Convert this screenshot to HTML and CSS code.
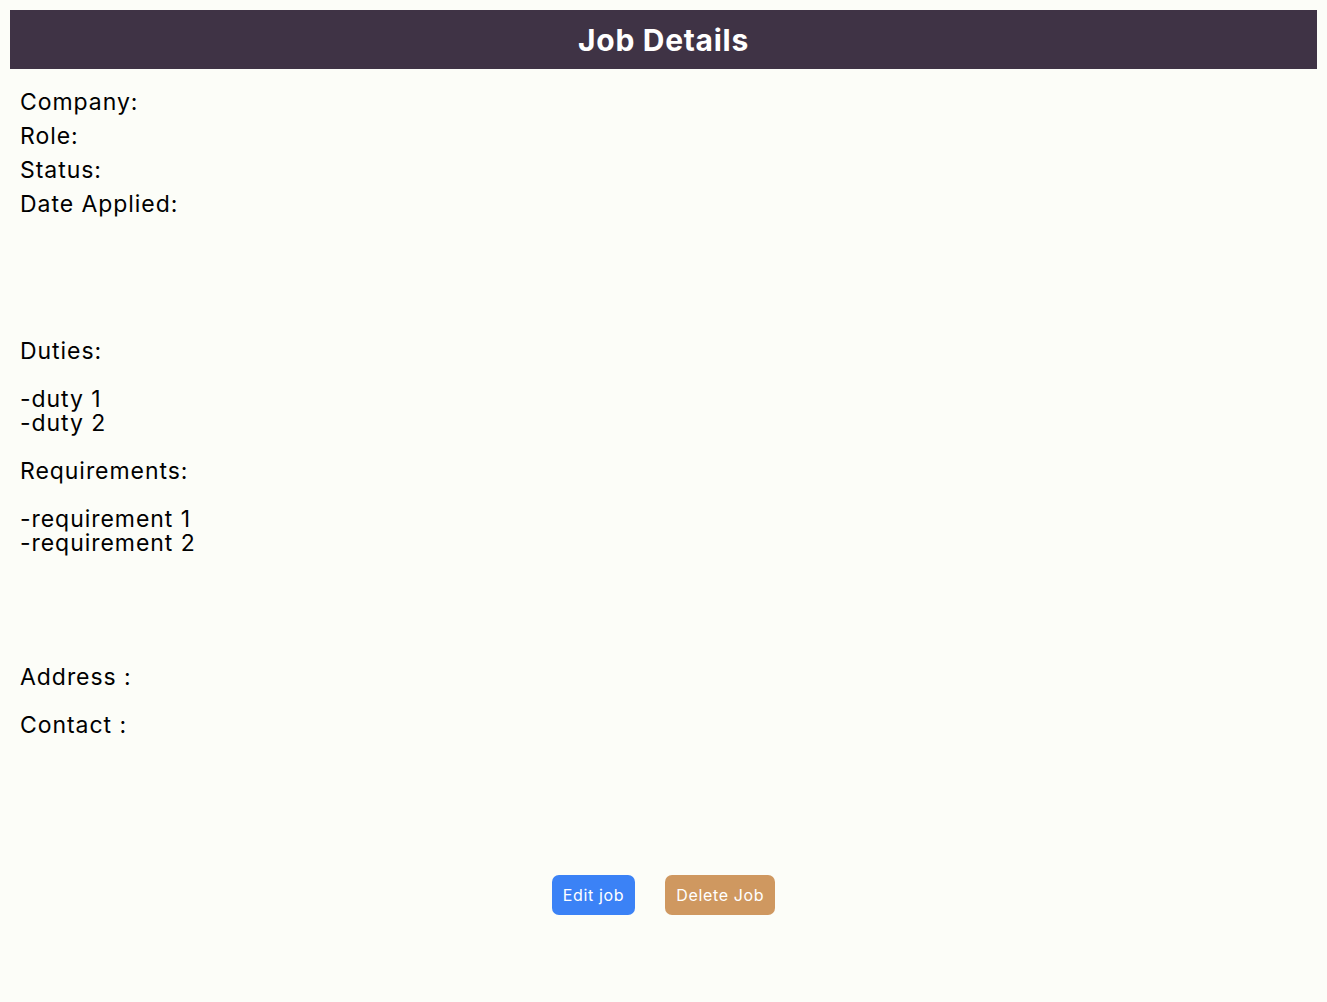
FILE: index.html
```html
<!DOCTYPE html>
<html lang="en">
<head>
<meta charset="utf-8">
<title>Job Details</title>
<link rel="stylesheet" href="styles.css">
</head>
<body>
<header class="topbar">
  <h1 class="title">Job Details</h1>
</header>
<main class="details">
  <section class="summary">
    <p class="field">Company:</p>
    <p class="field">Role:</p>
    <p class="field">Status:</p>
    <p class="field">Date Applied:</p>
  </section>
  <section class="lists">
    <p class="label">Duties:</p>
    <p class="items">-duty 1<br>-duty 2</p>
    <p class="label">Requirements:</p>
    <p class="items">-requirement 1<br>-requirement 2</p>
  </section>
  <section class="contact">
    <p class="label">Address :</p>
    <p class="label">Contact :</p>
  </section>
  <div class="actions">
    <button class="btn btn-edit" type="button">Edit job</button>
    <button class="btn btn-delete" type="button">Delete Job</button>
  </div>
</main>
</body>
</html>
```

FILE: styles.css
```css
html, body {
  background: #fcfdf8;
}
body {
  margin: 10px;
  font-family: Inter, "Noto Sans", sans-serif;
  color: #000;
}
.topbar {
  background: #3f3345;
  height: 59px;
  display: flex;
  align-items: center;
  justify-content: center;
}
.title {
  margin: 0;
  color: #fff;
  font-size: 30px;
  font-weight: 700;
  letter-spacing: 0.7px;
}
.details {
  padding: 0 10px;
  font-size: 23px;
  letter-spacing: 0.95px;
}
.details p {
  margin: 0;
}
.summary {
  display: flex;
  flex-direction: column;
  gap: 8px;
  padding-top: 20px;
}
.field {
  line-height: 26px;
}
.lists {
  padding-top: 122px;
  display: flex;
  flex-direction: column;
  gap: 24px;
}
.label, .items {
  line-height: 24px;
}
.contact {
  padding-top: 110px;
  display: flex;
  flex-direction: column;
  gap: 24px;
}
.actions {
  display: flex;
  justify-content: center;
  gap: 30px;
  padding-top: 138px;
}
.btn {
  font-family: Inter, "Noto Sans", sans-serif;
  font-size: 16px;
  letter-spacing: 0.65px;
  color: #fff;
  border: none;
  border-radius: 7px;
  height: 40px;
  padding: 0 11px;
}
.btn-edit {
  background: #3b82f6;
}
.btn-delete {
  background: #cf9860;
}
```
